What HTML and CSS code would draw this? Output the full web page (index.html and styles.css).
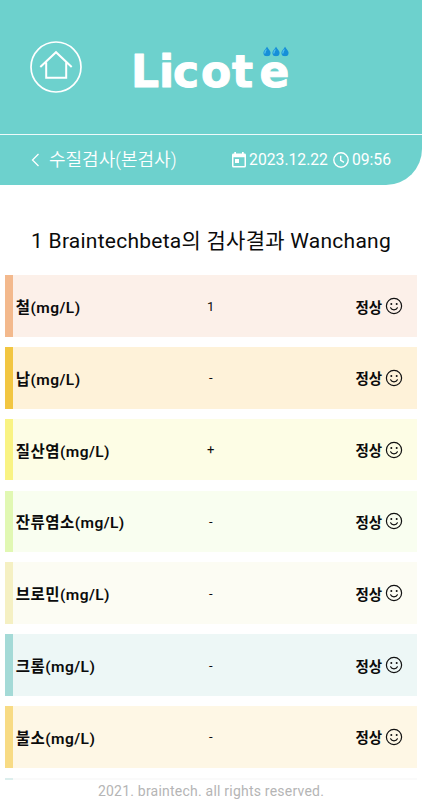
FILE: index.html
```html
<!DOCTYPE html>
<html lang="ko">
<head>
<meta charset="utf-8">
<title>Licote</title>
<link rel="stylesheet" href="styles.css">
</head>
<body>
<svg class="defs" width="0" height="0">
  <symbol id="smile" viewBox="0 0 18 18">
    <circle cx="9" cy="9" r="7.6" fill="none" stroke="#111" stroke-width="1.2"/>
    <circle cx="6.3" cy="7" r="1" fill="#111"/><circle cx="11.7" cy="7" r="1" fill="#111"/>
    <path d="M5.6 10.8C6.8 13.6 11.2 13.6 12.4 10.8" fill="none" stroke="#111" stroke-width="1.2" stroke-linecap="round"/>
  </symbol>
  <symbol id="drop" viewBox="0 0 8 10">
    <path d="M4 0C5 2.6 7.6 4 7.6 6.3A3.6 3.5 0 0 1 .4 6.3C.4 4 3.2 2.6 4 0Z" fill="#168fd8"/>
    <path d="M3.4 3C2.2 4.5 1.4 5.5 2 7" fill="none" stroke="#59c5ef" stroke-width="1.2"/>
  </symbol>
</svg>
<header class="header">
  <div class="brand">
    <svg class="home" viewBox="0 0 54 54" fill="none" stroke="#fff">
      <circle cx="27" cy="27" r="25" stroke-width="1.7"/>
      <path d="M11.3 27 27 12.2 42.7 27M17.2 22.5V37.8H37.2V22.5" stroke-width="2"/>
    </svg>
    <svg class="logo" viewBox="0 0 160 46">
      <text class="logo-text" x="-2 26 40 68 99 126.500" y="40.500">Licote</text>
      <use href="#drop" x="129.500" y="0.500" width="9" height="10"/>
      <use href="#drop" x="138.500" y="0.500" width="9" height="10"/>
      <use href="#drop" x="147.500" y="0.500" width="9" height="10"/>
    </svg>
  </div>
  <div class="bar">
    <svg class="back" viewBox="0 0 9 14"><path d="M7.5 1 1.5 7l6 6" fill="none" stroke="#fff" stroke-width="1.3"/></svg>
    <h1 class="title">수질검사(본검사)</h1>
    <div class="stamp">
      <svg class="calendar" viewBox="0 0 14 16"><path fill="#fff" fill-rule="evenodd" d="M2.3 0H4v1.6h6V0h1.7v1.6h.8Q14 1.6 14 3v11q0 1.5-1.5 1.5h-11Q0 15.500 0 14V3q0-1.400 1.500-1.400h.8ZM1.500 5.300V14h11V5.300ZM3 7h4v4H3Z"/></svg>
      <span class="date">2023.12.22</span>
      <svg class="clock" viewBox="0 0 16 16" fill="none" stroke="#fff" stroke-width="1.4"><circle cx="8" cy="8" r="7.200"/><path d="M7.700 3.800V8.400L11 10.400"/></svg>
      <span class="time">09:56</span>
    </div>
  </div>
</header>
<main class="results">
  <h2 class="heading">1 Braintechbeta의 검사결과 Wanchang</h2>
  <ul class="list">
    <li class="row iron"><span class="name">철(mg/L)</span><span class="value">1</span><span class="state">정상<svg class="face"><use href="#smile"/></svg></span></li>
    <li class="row lead"><span class="name">납(mg/L)</span><span class="value">-</span><span class="state">정상<svg class="face"><use href="#smile"/></svg></span></li>
    <li class="row nitrate"><span class="name">질산염(mg/L)</span><span class="value">+</span><span class="state">정상<svg class="face"><use href="#smile"/></svg></span></li>
    <li class="row chlorine"><span class="name">잔류염소(mg/L)</span><span class="value">-</span><span class="state">정상<svg class="face"><use href="#smile"/></svg></span></li>
    <li class="row bromine"><span class="name">브로민(mg/L)</span><span class="value">-</span><span class="state">정상<svg class="face"><use href="#smile"/></svg></span></li>
    <li class="row chrome"><span class="name">크롬(mg/L)</span><span class="value">-</span><span class="state">정상<svg class="face"><use href="#smile"/></svg></span></li>
    <li class="row fluorine"><span class="name">불소(mg/L)</span><span class="value">-</span><span class="state">정상<svg class="face"><use href="#smile"/></svg></span></li>
    <li class="row next"></li>
  </ul>
</main>
<footer class="footer">2021. braintech. all rights reserved.</footer>
</body>
</html>
```
FILE: styles.css
```css
* { box-sizing: border-box; }
body {
  margin: 0;
  height: 800px;
  display: flex;
  flex-direction: column;
  overflow: hidden;
  background: #fff;
  color: #0b0b0b;
  font-family: Roboto, "Noto Sans CJK KR", sans-serif;
}
.defs { position: absolute; }
.header {
  flex: none;
  height: 184.500px;
  background: #6dd1cd;
  border-bottom-right-radius: 36px;
  color: #fff;
}
.brand {
  height: 135px;
  padding: 40px 0 0 29.400px;
  display: flex;
  align-items: flex-start;
  border-bottom: 1.500px solid #eefafa;
}
.home { width: 54px; height: 54px; }
.logo { width: 160px; height: 46px; margin: 6px 0 0 49.600px; overflow: visible; }
.logo-text {
  font: bold 44px "DejaVu Sans", sans-serif;
  fill: #fff;
  stroke: #fff;
  stroke-width: 1px;
  stroke-linejoin: round;
}
.bar {
  height: 49px;
  padding: 0 31px 0 30.500px;
  display: flex;
  align-items: center;
}
.back { width: 9px; height: 14px; }
.title { margin: 0 0 0 9.500px; font-size: 18px; font-weight: 350; line-height: 24px; white-space: nowrap; }
.stamp { margin-left: auto; display: flex; align-items: center; font-size: 15.700px; font-weight: 400; line-height: 24px; }
.calendar { width: 14px; height: 16px; margin-right: 3px; }
.clock { width: 16px; height: 16px; margin: 0 3px 0 5px; }
.results { flex: 1; min-height: 0; overflow: hidden; padding: 0 5.300px; }
.heading {
  margin: 41.500px 0 19.300px;
  font-size: 21px;
  font-weight: 400;
  line-height: 30px;
  letter-spacing: .25px;
  text-align: center;
  white-space: nowrap;
}
.list { margin: 0; padding: 0; list-style: none; display: flex; flex-direction: column; gap: 10.300px; }
.row {
  height: 61.500px;
  flex: none;
  display: grid;
  grid-template-columns: 1fr 30px 1fr;
  align-items: center;
  padding: 0 13.500px 0 2.500px;
  border-left: 8.500px solid;
}
.name { font-size: 15.500px; font-weight: 600; letter-spacing: .45px; white-space: nowrap; }
.value { padding-left: 2.500px; font-size: 13px; text-align: center; }
.state { display: flex; justify-content: flex-end; align-items: center; gap: 3px; font-size: 14.500px; font-weight: 600; }
.face { width: 18px; height: 18px; }
.iron { background: #fcf0e9; border-color: #f3b98d; }
.lead { background: #fef2d9; border-color: #f2c641; }
.nitrate { background: #fdfde5; border-color: #f9f383; }
.chlorine { background: #f9fef0; border-color: #e1f8b3; }
.bromine { background: #fcfcf3; border-color: #f5f0c3; }
.chrome { background: #edf7f6; border-color: #a4dad7; }
.fluorine { background: #fef7e5; border-color: #f8db84; }
.next { background: #fafafa; border-color: #dceeed; }
.footer {
  flex: none;
  height: 20px;
  line-height: 22px;
  background: #fff;
  text-align: center;
  font-size: 14px;
  letter-spacing: .22px;
  color: #b5b5b5;
}
```
